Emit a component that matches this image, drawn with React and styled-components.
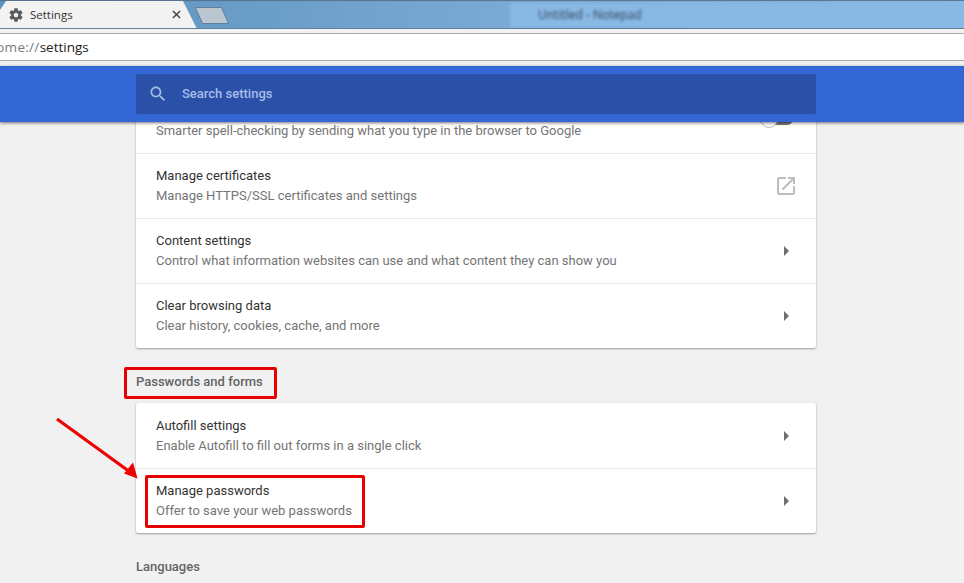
import React from 'react';
import styled, { createGlobalStyle } from 'styled-components';

const GlobalStyle = createGlobalStyle`
  html, body {
    margin: 0;
    padding: 0;
    background: #f1f1f1;
  }
`;

const Page = styled.div`
  position: relative;
  width: 964px;
  height: 583px;
  overflow: hidden;
  display: flex;
  flex-direction: column;
  font-family: Roboto, "Liberation Sans", sans-serif;
  background: #f1f1f1;
`;

const TabStrip = styled.div`
  flex: none;
  display: flex;
  height: 29px;
  box-sizing: border-box;
  border-bottom: 1px solid #5d7f9e;
  background: linear-gradient(to right, #5c93c0 0, #6c9fc8 30%, #7aaad4 52%, #8dbde8 100%);
  box-shadow: inset 0 2px 1px -1px #56718c;
  overflow: hidden;
`;

const Tab = styled.div`
  flex: none;
  display: flex;
  align-items: center;
  width: 197px;
  height: 29px;
  padding: 0 0 0 8px;
  box-sizing: border-box;
  background: #f2f2f2;
  clip-path: polygon(0 10px, 6px 1px, 183px 1px, 197px 29px, 0 29px);
  font-family: "Open Sans", sans-serif;
  font-size: 11.5px;
  color: #333;
`;

const TabTitle = styled.span`
  margin-left: 6px;
`;

const TabClose = styled.svg`
  margin-left: 99px;
  width: 9px;
  height: 9px;
`;

const NewTab = styled.svg`
  flex: none;
  width: 36px;
  height: 19px;
  margin: 6px 0 0 -3px;
`;

const BlurredWindow = styled.div`
  margin: 3px 0 0 auto;
  width: 454px;
  padding-left: 28px;
  box-sizing: border-box;
  background: #88b8e4;
  color: #2f4257;
  font-family: "Open Sans", sans-serif;
  font-size: 12px;
  line-height: 24px;
  filter: blur(1.4px);
`;

const TabSpacer = styled.div`
  flex: 1;
`;

const AddressGap = styled.div`
  flex: none;
  height: 4px;
  background: #f2f2f2;
  border-bottom: 1px solid #a9a9a9;
`;

const AddressBar = styled.div`
  flex: none;
  height: 26px;
  line-height: 26px;
  overflow: hidden;
  background: #fff;
  border-bottom: 1px solid #a9a9a9;
  font-family: "Open Sans", sans-serif;
  font-size: 13.5px;
  white-space: nowrap;
  color: #222;
`;

const Scheme = styled.span`
  margin-left: -25px;
  letter-spacing: 0.3px;
  color: #7a7a7a;
`;

const ToolbarGap = styled.div`
  flex: none;
  height: 5px;
  background: #f1f1f1;
`;

const Header = styled.header`
  position: relative;
  z-index: 2;
  flex: none;
  height: 56px;
  padding: 8px 0 0 136px;
  box-sizing: border-box;
  background: #3367d6;
  box-shadow: 0 1px 3px rgba(0, 0, 0, 0.55);
`;

const SearchBox = styled.div`
  display: flex;
  align-items: center;
  width: 680px;
  height: 40px;
  padding-left: 12px;
  box-sizing: border-box;
  border-radius: 2px;
  background: #2a50a8;
  color: #a8bce8;
  font-size: 13px;
  font-weight: 500;
`;

const SearchLabel = styled.span`
  margin: 0 0 2px 14px;
`;

const Main = styled.main`
  flex: 1;
  min-height: 0;
  width: 680px;
  margin-left: 136px;
`;

const Card = styled.section`
  margin-top: ${({ $top }) => $top || 0}px;
  background: #fff;
  border-radius: 2px;
  box-shadow: 0 1px 2px rgba(0, 0, 0, 0.35), 0 0 1px rgba(0, 0, 0, 0.12);
`;

const Row = styled.div`
  display: flex;
  align-items: center;
  justify-content: space-between;
  height: 65px;
  padding: 0 20px;
  box-sizing: border-box;
  border-top: 1px solid #e8e8e8;

  &:first-child {
    border-top: 0;
  }
`;

const RowTitle = styled.div`
  font-size: 13px;
  line-height: 20px;
  color: #333;
`;

const RowSub = styled.div`
  font-size: 13px;
  line-height: 20px;
  color: #757575;
`;

const SectionTitle = styled.h2`
  margin: 24px 0 ${({ $bottom }) => $bottom}px;
  font-size: 13px;
  font-weight: 500;
  line-height: 20px;
  color: #646464;
`;

const Caret = styled.span`
  flex: none;
  width: 0;
  height: 0;
  margin-right: 7px;
  border-left: 5px solid #6e6e6e;
  border-top: 5px solid transparent;
  border-bottom: 5px solid transparent;
`;

const OpenIcon = styled.svg`
  flex: none;
  width: 24px;
  height: 24px;
  margin-right: -2px;
  fill: #bdbdbd;
`;

const Toggle = styled.span`
  position: relative;
  flex: none;
  width: 26px;
  height: 12px;
  margin: 0 3px 4px 0;
  border-radius: 6px;
  background: #777;

  &::before {
    content: '';
    position: absolute;
    left: -7px;
    top: -3px;
    width: 18px;
    height: 18px;
    box-sizing: border-box;
    border-radius: 50%;
    border: 1px solid #bbb;
    background: #fff;
  }
`;

const Annotation = styled.div`
  position: absolute;
  box-sizing: border-box;
  left: ${({ $x }) => $x}px;
  top: ${({ $y }) => $y}px;
  width: ${({ $w }) => $w}px;
  height: ${({ $h }) => $h}px;
  border: 3px solid #e60000;
  border-radius: 2px;
`;

const Arrow = styled.svg`
  position: absolute;
  left: 50px;
  top: 410px;
  width: 100px;
  height: 80px;
`;

const rows = [
  { title: 'Manage certificates', sub: 'Manage HTTPS/SSL certificates and settings', icon: 'open' },
  { title: 'Content settings', sub: 'Control what information websites can use and what content they can show you' },
  { title: 'Clear browsing data', sub: 'Clear history, cookies, cache, and more' },
];

const passwordRows = [
  { title: 'Autofill settings', sub: 'Enable Autofill to fill out forms in a single click' },
  { title: 'Manage passwords', sub: 'Offer to save your web passwords' },
];

const SettingRow = ({ title, sub, icon }) => (
  <Row>
    <div>
      <RowTitle>{title}</RowTitle>
      <RowSub>{sub}</RowSub>
    </div>
    {icon === 'open' ? (
      <OpenIcon viewBox="0 0 24 24">
        <path d="M19 19H5V5h7V3H5c-1.11 0-2 .9-2 2v14c0 1.1.89 2 2 2h14c1.1 0 2-.9 2-2v-7h-2v7zM14 3v2h3.59l-9.83 9.83 1.41 1.41L19 6.41V10h2V3h-7z" />
      </OpenIcon>
    ) : (
      <Caret />
    )}
  </Row>
);

const App = () => (
  <Page>
    <GlobalStyle />
    <TabStrip>
      <Tab>
        <svg width="16" height="16" viewBox="0 0 24 24" fill="#5a5a5a">
          <path d="M19.43 12.98c.04-.32.07-.64.07-.98s-.03-.66-.07-.98l2.11-1.65c.19-.15.24-.42.12-.64l-2-3.46c-.12-.22-.39-.3-.61-.22l-2.49 1c-.52-.4-1.08-.73-1.69-.98l-.38-2.65C14.46 2.18 14.25 2 14 2h-4c-.25 0-.46.18-.49.42l-.38 2.65c-.61.25-1.17.59-1.69.98l-2.49-1c-.23-.09-.49 0-.61.22l-2 3.46c-.13.22-.07.49.12.64l2.11 1.65c-.04.32-.07.65-.07.98s.03.66.07.98l-2.11 1.65c-.19.15-.24.42-.12.64l2 3.46c.12.22.39.3.61.22l2.49-1c.52.4 1.08.73 1.69.98l.38 2.65c.03.24.24.42.49.42h4c.25 0 .46-.18.49-.42l.38-2.65c.61-.25 1.17-.59 1.69-.98l2.49 1c.23.09.49 0 .61-.22l2-3.46c.12-.22.07-.49-.12-.64l-2.11-1.65zM12 15.5c-1.93 0-3.5-1.57-3.5-3.5s1.57-3.5 3.5-3.5 3.5 1.57 3.5 3.5-1.57 3.5-3.5 3.5z" />
        </svg>
        <TabTitle>Settings</TabTitle>
        <TabClose viewBox="0 0 10 10">
          <path d="M1 1l8 8M9 1l-8 8" stroke="#444" strokeWidth="1.6" fill="none" />
        </TabClose>
      </Tab>
      <NewTab viewBox="0 0 36 19">
        <path d="M1.5 1.5h26l7 16h-26z" fill="#bcc6d0" stroke="#5f7f9c" strokeWidth="1" strokeLinejoin="round" />
      </NewTab>
      <TabSpacer />
      <BlurredWindow>Untitled - Notepad</BlurredWindow>
    </TabStrip>
    <AddressGap />
    <AddressBar>
      <Scheme>chrome://</Scheme>settings
    </AddressBar>
    <ToolbarGap />
    <Header>
      <SearchBox>
        <svg width="20" height="20" viewBox="0 0 24 24" fill="#a8bce8">
          <path d="M15.5 14h-.79l-.28-.27C15.41 12.59 16 11.11 16 9.5 16 5.91 13.09 3 9.5 3S3 5.91 3 9.5 5.91 16 9.5 16c1.61 0 3.09-.59 4.23-1.57l.27.28v.79l5 4.99L20.49 19l-4.99-5zm-6 0C7.01 14 5 11.99 5 9.5S7.01 5 9.5 5 14 7.01 14 9.5 11.99 14 9.5 14z" />
        </svg>
        <SearchLabel>Search settings</SearchLabel>
      </SearchBox>
    </Header>
    <Main>
      <Card $top={-34}>
        <Row>
          <div>
            <RowTitle>Safe Browsing</RowTitle>
            <RowSub>Smarter spell-checking by sending what you type in the browser to Google</RowSub>
          </div>
          <Toggle />
        </Row>
        {rows.map((row) => (
          <SettingRow key={row.title} {...row} />
        ))}
      </Card>
      <SectionTitle $bottom={11}>Passwords and forms</SectionTitle>
      <Card>
        {passwordRows.map((row) => (
          <SettingRow key={row.title} {...row} />
        ))}
      </Card>
      <SectionTitle $bottom={0}>Languages</SectionTitle>
    </Main>
    <Annotation $x={124} $y={367} $w={153} $h={32} />
    <Annotation $x={145} $y={475} $w={220} $h={53} />
    <Arrow viewBox="0 0 100 80">
      <path d="M7 9L80 62" stroke="#ee0000" strokeWidth="3.2" fill="none" />
      <path d="M87.5 68.5L74 63.5L83 52.5z" fill="#ee0000" />
    </Arrow>
  </Page>
);

export default App;
